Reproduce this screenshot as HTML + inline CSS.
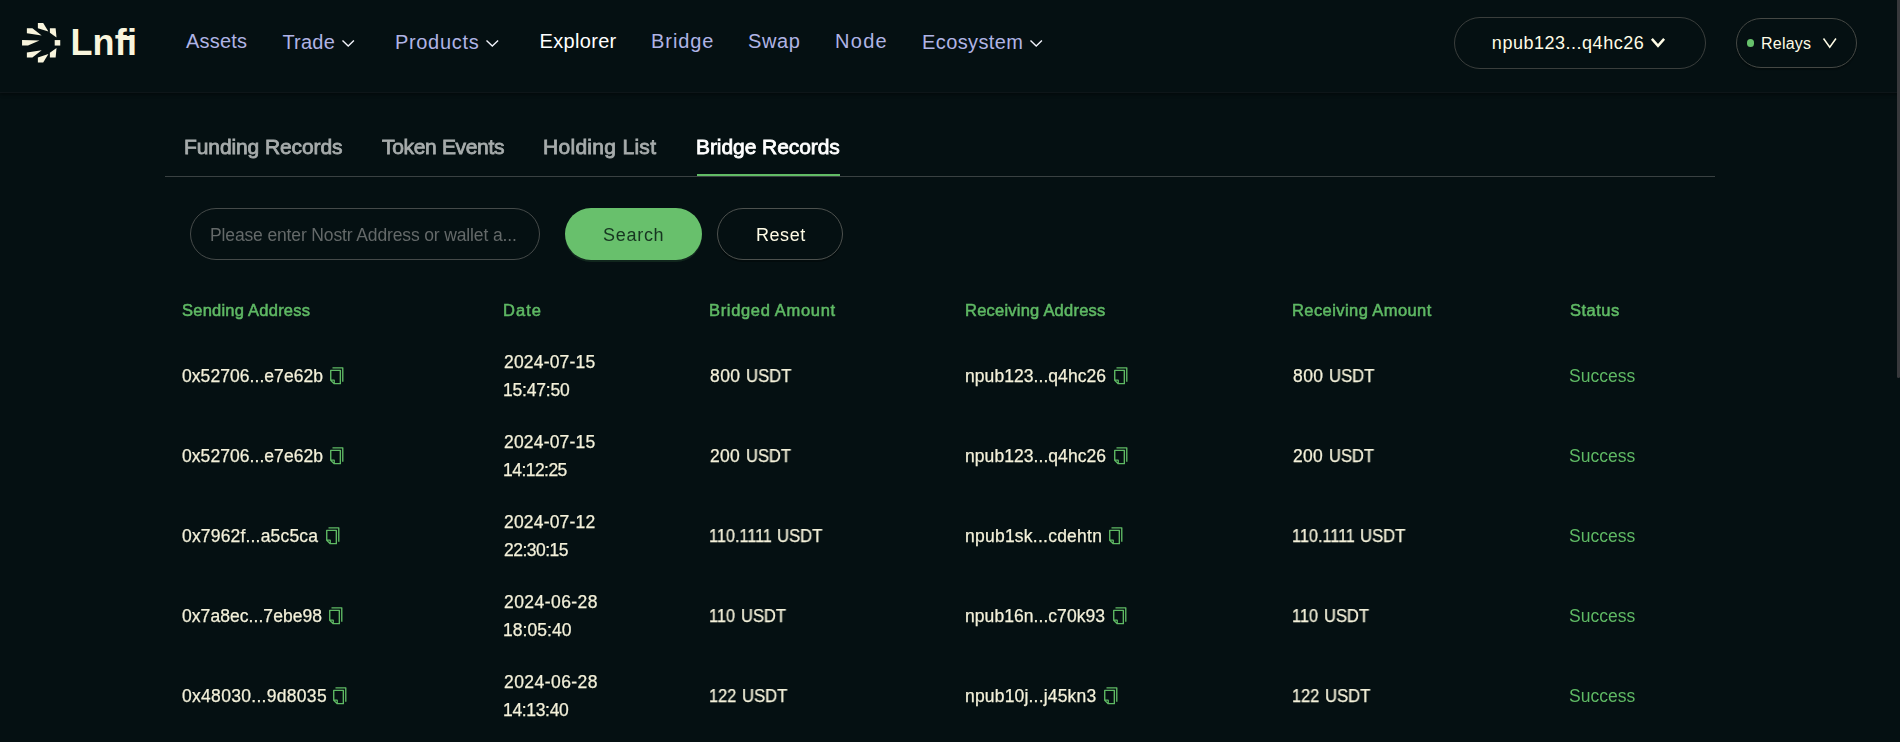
<!DOCTYPE html>
<html lang="en">
<head>
<meta charset="utf-8">
<title>Lnfi Explorer - Bridge Records</title>
<style>
html,body{margin:0;padding:0;background:#051012;}
body{position:relative;width:1900px;height:742px;overflow:hidden;font-family:"Liberation Sans", sans-serif;}
.t{position:absolute;white-space:nowrap;}
.abs{position:absolute;}
.g{will-change:transform;}
.b{-webkit-text-stroke:0.25px #f4f1da;}
.tb{-webkit-text-stroke:0.8px #a7acac;}
.tb.on{-webkit-text-stroke:0.8px #ffffff;}
.th{-webkit-text-stroke:0.55px #5fb964;}
.hdr{left:0;top:0;width:1900px;height:92px;border-bottom:1px solid #0e1619;box-shadow:0 2px 3px rgba(0,0,0,.35);background:#051012;}
.pill{box-sizing:border-box;border:1px solid #3e4341;border-radius:26px;}
.tabline{left:165px;top:176px;width:1550px;height:1px;background:#3a4142;}
.ink{left:697px;top:174px;width:143px;height:2px;background:#62bc66;}
.sb{left:1897px;top:0;width:3px;height:378px;background:#38393c;border-radius:0 0 2px 2px;}
.ic{fill:#5fb964;}
</style>
</head>
<body>
<header>
<div class="abs hdr"></div>
<svg class="abs" style="left:0;top:0" width="80" height="80" viewBox="0 0 80 80" fill="#f9f5dd"><polygon points="22.05,40.07 39.50,40.60 28.00,45.56 22.05,45.56"/><polygon points="54.70,40.07 60.25,40.07 60.25,45.56 54.70,45.56"/><polygon points="26.90,28.20 32.40,28.20 41.70,35.40 26.90,33.20"/><polygon points="26.90,57.40 32.40,57.40 41.70,50.20 26.90,52.40"/><polygon points="37.85,23.00 43.20,23.00 48.40,31.50 37.85,28.20"/><polygon points="37.85,62.60 43.20,62.60 48.40,54.10 37.85,57.40"/><polygon points="49.90,28.20 55.65,28.20 56.50,37.60 49.90,32.80"/><polygon points="49.90,57.40 55.65,57.40 56.50,48.00 49.90,52.80"/></svg>
<div class="abs" style="left:121px;top:35.9px;width:9px;height:4.3px;background:#f9f5dd"></div>
<div class="brand"><span class="t" style="left:70.39px;top:18.93px;font-size:36px;line-height:47px;color:#f9f5dd;font-weight:700;letter-spacing:0.240px;">Lnfi</span></div>
<nav>
<span class="t" style="left:186.00px;top:28.07px;font-size:20px;line-height:26px;color:#b0b4e5;letter-spacing:0.180px;">Assets</span>
<span class="t" style="left:282.40px;top:29.07px;font-size:20px;line-height:26px;color:#b0b4e5;letter-spacing:0.225px;">Trade</span><svg class="abs" style="left:339.80px;top:37.60px" width="16.40" height="10.70" viewBox="0 0 16.40 10.70" fill="none" stroke="#f2f3fb" stroke-width="1.4"><polyline points="2.49,2.49 8.20,8.00 13.91,2.49"/></svg>
<span class="t" style="left:394.88px;top:29.07px;font-size:20px;line-height:26px;color:#b0b4e5;letter-spacing:0.694px;">Products</span><svg class="abs" style="left:483.80px;top:37.60px" width="16.60" height="10.70" viewBox="0 0 16.60 10.70" fill="none" stroke="#f2f3fb" stroke-width="1.4"><polyline points="2.49,2.49 8.30,8.00 14.11,2.49"/></svg>
<span class="t" style="left:539.60px;top:28.07px;font-size:20px;line-height:26px;color:#ffffff;letter-spacing:0.309px;">Explorer</span>
<span class="t" style="left:651.10px;top:28.07px;font-size:20px;line-height:26px;color:#b0b4e5;letter-spacing:0.900px;">Bridge</span>
<span class="t" style="left:748.10px;top:28.07px;font-size:20px;line-height:26px;color:#b0b4e5;letter-spacing:0.600px;">Swap</span>
<span class="t" style="left:834.96px;top:28.07px;font-size:20px;line-height:26px;color:#b0b4e5;letter-spacing:1.320px;">Node</span>
<span class="t" style="left:922.10px;top:29.07px;font-size:20px;line-height:26px;color:#b0b4e5;letter-spacing:0.382px;">Ecosystem</span><svg class="abs" style="left:1027.80px;top:37.60px" width="16.40" height="10.70" viewBox="0 0 16.40 10.70" fill="none" stroke="#f2f3fb" stroke-width="1.4"><polyline points="2.49,2.49 8.20,8.00 13.91,2.49"/></svg>
</nav>
<div class="account">
<div class="abs pill" style="left:1454px;top:17px;width:252px;height:52px;border-color:#3a3e3c"></div>
<span class="t" style="left:1491.86px;top:32.26px;font-size:18px;line-height:23px;color:#fffce6;letter-spacing:0.516px;">npub123...q4hc26</span>
<svg class="abs" style="left:1649.20px;top:36.20px" width="18.00" height="13.00" viewBox="0 0 18.00 13.00" fill="none" stroke="#fffce6" stroke-width="2.5"><polyline points="2.88,2.88 9.00,9.75 15.12,2.88"/></svg>
</div>
<div class="relays">
<div class="abs pill" style="left:1736px;top:18px;width:121px;height:50px;border-radius:25px;border-color:#454844;box-shadow:0 2px 1px rgba(0,0,0,.25)"></div>
<div class="abs" style="left:1746.7px;top:39px;width:7.6px;height:7.6px;border-radius:50%;background:#66c16b"></div>
<span class="t" style="left:1761.10px;top:32.96px;font-size:16px;line-height:21px;color:#fffce6;letter-spacing:0.180px;">Relays</span>
<svg class="abs" style="left:1820.50px;top:36.00px" width="17.50" height="14.00" viewBox="0 0 17.50 14.00" fill="none" stroke="#fffce6" stroke-width="1.5"><polyline points="2.52,2.52 8.75,11.25 14.97,2.52"/></svg>
</div>
</header>
<main>
<div role="tablist">
<span class="t g tb" style="left:184.10px;top:132.62px;font-size:21px;line-height:27px;color:#a7acac;letter-spacing:-0.103px;">Funding Records</span>
<span class="t g tb" style="left:382.00px;top:132.62px;font-size:21px;line-height:27px;color:#a7acac;letter-spacing:-0.327px;">Token Events</span>
<span class="t g tb" style="left:543.32px;top:132.62px;font-size:21px;line-height:27px;color:#a7acac;letter-spacing:0.295px;">Holding List</span>
<span class="t g tb on" style="left:696.10px;top:132.62px;font-size:21px;line-height:27px;color:#ffffff;letter-spacing:-0.069px;">Bridge Records</span>
<div class="abs tabline"></div>
<div class="abs ink"></div>
</div>
<div class="filters">
<div class="abs pill" style="left:190px;top:208px;width:350px;height:52px;border-color:#454a49"></div>
<span class="t g" style="left:210.15px;top:224.44px;font-size:17.5px;line-height:23px;color:#646969;letter-spacing:-0.135px;">Please enter Nostr Address or wallet a...</span>
<div class="abs" style="left:565px;top:208px;width:137px;height:52px;border-radius:26px;background:#68c06c;box-shadow:0 2px 0 rgba(104,192,108,.13)"></div>
<span class="t g" style="left:603.10px;top:224.26px;font-size:18px;line-height:23px;color:#163520;letter-spacing:0.720px;">Search</span>
<div class="abs pill" style="left:717px;top:208px;width:126px;height:52px;border-color:#4d514e;box-shadow:0 2px 0 rgba(0,0,0,.3)"></div>
<span class="t g" style="left:755.88px;top:224.26px;font-size:18px;line-height:23px;color:#fffce6;letter-spacing:0.540px;">Reset</span>
</div>
<div role="table">
<div role="row">
<span class="t g th" style="left:182.40px;top:300.18px;font-size:16.5px;line-height:21px;color:#5fb964;letter-spacing:0.231px;">Sending Address</span>
<span class="t g th" style="left:502.88px;top:300.18px;font-size:16.5px;line-height:21px;color:#5fb964;letter-spacing:1.020px;">Date</span>
<span class="t g th" style="left:709.10px;top:300.18px;font-size:16.5px;line-height:21px;color:#5fb964;letter-spacing:0.665px;">Bridged Amount</span>
<span class="t g th" style="left:965.10px;top:300.18px;font-size:16.5px;line-height:21px;color:#5fb964;letter-spacing:0.225px;">Receiving Address</span>
<span class="t g th" style="left:1292.10px;top:300.18px;font-size:16.5px;line-height:21px;color:#5fb964;letter-spacing:0.420px;">Receiving Amount</span>
<span class="t g th" style="left:1569.60px;top:300.18px;font-size:16.5px;line-height:21px;color:#5fb964;letter-spacing:0.504px;">Status</span>
</div>
<div role="row">
<span class="t g b" style="left:182.00px;top:365.24px;font-size:17.5px;line-height:23px;color:#f4f1da;letter-spacing:0.060px;">0x52706...e7e62b</span>
<svg class="abs ic" style="left:326.65px;top:366.00px" width="19.5" height="19.5" viewBox="0 0 1024 1024"><path d="M832 64H296c-4.400 0-8 3.600-8 8v56c0 4.400 3.600 8 8 8h496v688c0 4.400 3.600 8 8 8h56c4.400 0 8-3.600 8-8V96c0-17.700-14.300-32-32-32zM704 192H192c-17.700 0-32 14.300-32 32v530.700c0 8.500 3.400 16.600 9.400 22.600l173.300 173.300c2.200 2.200 4.700 4 7.400 5.500v1.900h4.200c3.500 1.300 7.200 2 11 2H704c17.700 0 32-14.300 32-32V224c0-17.700-14.300-32-32-32zM350 856.200L263.900 770H350v86.200zM664 888H414V746c0-22.100-17.900-40-40-40H232V264h432v624z"/></svg>
<span class="t g b" style="left:503.60px;top:351.24px;font-size:17.5px;line-height:23px;color:#f4f1da;letter-spacing:0.180px;">2024-07-15</span>
<span class="t g b" style="left:502.88px;top:379.24px;font-size:17.5px;line-height:23px;color:#f4f1da;letter-spacing:-0.206px;">15:47:50</span>
<span class="t g b" style="left:710.00px;top:365.24px;font-size:17.5px;line-height:23px;color:#f4f1da;letter-spacing:0.450px;">800</span>
<span class="t g b" style="left:745.81px;top:365.24px;font-size:17.5px;line-height:23px;color:#f4f1da;transform:scaleX(0.9514);transform-origin:0 0;">USDT</span>
<span class="t g b" style="left:965.10px;top:365.24px;font-size:17.5px;line-height:23px;color:#f4f1da;letter-spacing:0.060px;">npub123...q4hc26</span>
<svg class="abs ic" style="left:1111.15px;top:366.00px" width="19.5" height="19.5" viewBox="0 0 1024 1024"><path d="M832 64H296c-4.400 0-8 3.600-8 8v56c0 4.400 3.600 8 8 8h496v688c0 4.400 3.600 8 8 8h56c4.400 0 8-3.600 8-8V96c0-17.700-14.300-32-32-32zM704 192H192c-17.700 0-32 14.300-32 32v530.700c0 8.500 3.400 16.600 9.400 22.600l173.300 173.300c2.200 2.200 4.700 4 7.400 5.500v1.900h4.200c3.500 1.300 7.200 2 11 2H704c17.700 0 32-14.300 32-32V224c0-17.700-14.300-32-32-32zM350 856.200L263.900 770H350v86.200zM664 888H414V746c0-22.100-17.900-40-40-40H232V264h432v624z"/></svg>
<span class="t g b" style="left:1293.00px;top:365.24px;font-size:17.5px;line-height:23px;color:#f4f1da;letter-spacing:0.450px;">800</span>
<span class="t g b" style="left:1328.81px;top:365.24px;font-size:17.5px;line-height:23px;color:#f4f1da;transform:scaleX(0.9514);transform-origin:0 0;">USDT</span>
<span class="t g" style="left:1569.29px;top:365.24px;font-size:17.5px;line-height:23px;color:#5fb964;letter-spacing:0.030px;">Success</span>
</div>
<div role="row">
<span class="t g b" style="left:182.00px;top:445.24px;font-size:17.5px;line-height:23px;color:#f4f1da;letter-spacing:0.060px;">0x52706...e7e62b</span>
<svg class="abs ic" style="left:326.65px;top:446.00px" width="19.5" height="19.5" viewBox="0 0 1024 1024"><path d="M832 64H296c-4.400 0-8 3.600-8 8v56c0 4.400 3.600 8 8 8h496v688c0 4.400 3.600 8 8 8h56c4.400 0 8-3.600 8-8V96c0-17.700-14.300-32-32-32zM704 192H192c-17.700 0-32 14.300-32 32v530.700c0 8.500 3.400 16.600 9.400 22.600l173.300 173.300c2.200 2.200 4.700 4 7.400 5.500v1.900h4.200c3.500 1.300 7.200 2 11 2H704c17.700 0 32-14.300 32-32V224c0-17.700-14.300-32-32-32zM350 856.200L263.900 770H350v86.200zM664 888H414V746c0-22.100-17.900-40-40-40H232V264h432v624z"/></svg>
<span class="t g b" style="left:503.60px;top:431.24px;font-size:17.5px;line-height:23px;color:#f4f1da;letter-spacing:0.180px;">2024-07-15</span>
<span class="t g b" style="left:502.88px;top:459.24px;font-size:17.5px;line-height:23px;color:#f4f1da;letter-spacing:-0.540px;">14:12:25</span>
<span class="t g b" style="left:710.40px;top:445.24px;font-size:17.5px;line-height:23px;color:#f4f1da;letter-spacing:0.270px;">200</span>
<span class="t g b" style="left:745.82px;top:445.24px;font-size:17.5px;line-height:23px;color:#f4f1da;transform:scaleX(0.9427);transform-origin:0 0;">USDT</span>
<span class="t g b" style="left:965.10px;top:445.24px;font-size:17.5px;line-height:23px;color:#f4f1da;letter-spacing:0.060px;">npub123...q4hc26</span>
<svg class="abs ic" style="left:1111.15px;top:446.00px" width="19.5" height="19.5" viewBox="0 0 1024 1024"><path d="M832 64H296c-4.400 0-8 3.600-8 8v56c0 4.400 3.600 8 8 8h496v688c0 4.400 3.600 8 8 8h56c4.400 0 8-3.600 8-8V96c0-17.700-14.300-32-32-32zM704 192H192c-17.700 0-32 14.300-32 32v530.700c0 8.500 3.400 16.600 9.400 22.600l173.300 173.300c2.200 2.200 4.700 4 7.400 5.500v1.900h4.200c3.500 1.300 7.200 2 11 2H704c17.700 0 32-14.300 32-32V224c0-17.700-14.300-32-32-32zM350 856.200L263.900 770H350v86.200zM664 888H414V746c0-22.100-17.900-40-40-40H232V264h432v624z"/></svg>
<span class="t g b" style="left:1293.40px;top:445.24px;font-size:17.5px;line-height:23px;color:#f4f1da;letter-spacing:0.270px;">200</span>
<span class="t g b" style="left:1328.82px;top:445.24px;font-size:17.5px;line-height:23px;color:#f4f1da;transform:scaleX(0.9427);transform-origin:0 0;">USDT</span>
<span class="t g" style="left:1569.29px;top:445.24px;font-size:17.5px;line-height:23px;color:#5fb964;letter-spacing:0.030px;">Success</span>
</div>
<div role="row">
<span class="t g b" style="left:182.00px;top:525.24px;font-size:17.5px;line-height:23px;color:#f4f1da;letter-spacing:0.180px;">0x7962f...a5c5ca</span>
<svg class="abs ic" style="left:323.15px;top:526.00px" width="19.5" height="19.5" viewBox="0 0 1024 1024"><path d="M832 64H296c-4.400 0-8 3.600-8 8v56c0 4.400 3.600 8 8 8h496v688c0 4.400 3.600 8 8 8h56c4.400 0 8-3.600 8-8V96c0-17.700-14.300-32-32-32zM704 192H192c-17.700 0-32 14.300-32 32v530.700c0 8.500 3.400 16.600 9.400 22.600l173.300 173.300c2.200 2.200 4.700 4 7.400 5.500v1.900h4.200c3.500 1.300 7.200 2 11 2H704c17.700 0 32-14.300 32-32V224c0-17.700-14.300-32-32-32zM350 856.200L263.900 770H350v86.200zM664 888H414V746c0-22.100-17.900-40-40-40H232V264h432v624z"/></svg>
<span class="t g b" style="left:503.60px;top:511.24px;font-size:17.5px;line-height:23px;color:#f4f1da;letter-spacing:0.180px;">2024-07-12</span>
<span class="t g b" style="left:503.60px;top:539.24px;font-size:17.5px;line-height:23px;color:#f4f1da;letter-spacing:-0.514px;">22:30:15</span>
<span class="t g b" style="left:709.44px;top:525.24px;font-size:17.5px;line-height:23px;color:#f4f1da;transform:scaleX(0.9278);transform-origin:0 0;">110.1111</span>
<span class="t g b" style="left:776.81px;top:525.24px;font-size:17.5px;line-height:23px;color:#f4f1da;transform:scaleX(0.9514);transform-origin:0 0;">USDT</span>
<span class="t g b" style="left:965.10px;top:525.24px;font-size:17.5px;line-height:23px;color:#f4f1da;letter-spacing:0.240px;">npub1sk...cdehtn</span>
<svg class="abs ic" style="left:1106.15px;top:526.00px" width="19.5" height="19.5" viewBox="0 0 1024 1024"><path d="M832 64H296c-4.400 0-8 3.600-8 8v56c0 4.400 3.600 8 8 8h496v688c0 4.400 3.600 8 8 8h56c4.400 0 8-3.600 8-8V96c0-17.700-14.300-32-32-32zM704 192H192c-17.700 0-32 14.300-32 32v530.700c0 8.500 3.400 16.600 9.400 22.600l173.300 173.300c2.200 2.200 4.700 4 7.400 5.500v1.900h4.200c3.500 1.300 7.200 2 11 2H704c17.700 0 32-14.300 32-32V224c0-17.700-14.300-32-32-32zM350 856.200L263.900 770H350v86.200zM664 888H414V746c0-22.100-17.900-40-40-40H232V264h432v624z"/></svg>
<span class="t g b" style="left:1292.44px;top:525.24px;font-size:17.5px;line-height:23px;color:#f4f1da;transform:scaleX(0.9278);transform-origin:0 0;">110.1111</span>
<span class="t g b" style="left:1359.81px;top:525.24px;font-size:17.5px;line-height:23px;color:#f4f1da;transform:scaleX(0.9514);transform-origin:0 0;">USDT</span>
<span class="t g" style="left:1569.29px;top:525.24px;font-size:17.5px;line-height:23px;color:#5fb964;letter-spacing:0.030px;">Success</span>
</div>
<div role="row">
<span class="t g b" style="left:182.00px;top:605.24px;font-size:17.5px;line-height:23px;color:#f4f1da;letter-spacing:0.060px;">0x7a8ec...7ebe98</span>
<svg class="abs ic" style="left:326.15px;top:606.00px" width="19.5" height="19.5" viewBox="0 0 1024 1024"><path d="M832 64H296c-4.400 0-8 3.600-8 8v56c0 4.400 3.600 8 8 8h496v688c0 4.400 3.600 8 8 8h56c4.400 0 8-3.600 8-8V96c0-17.700-14.300-32-32-32zM704 192H192c-17.700 0-32 14.300-32 32v530.700c0 8.500 3.400 16.600 9.400 22.600l173.300 173.300c2.200 2.200 4.700 4 7.400 5.500v1.900h4.200c3.500 1.300 7.200 2 11 2H704c17.700 0 32-14.300 32-32V224c0-17.700-14.300-32-32-32zM350 856.200L263.900 770H350v86.200zM664 888H414V746c0-22.100-17.900-40-40-40H232V264h432v624z"/></svg>
<span class="t g b" style="left:503.60px;top:591.24px;font-size:17.5px;line-height:23px;color:#f4f1da;letter-spacing:0.440px;">2024-06-28</span>
<span class="t g b" style="left:502.88px;top:619.24px;font-size:17.5px;line-height:23px;color:#f4f1da;letter-spacing:0.051px;">18:05:40</span>
<span class="t g b" style="left:709.44px;top:605.24px;font-size:17.5px;line-height:23px;color:#f4f1da;transform:scaleX(0.9295);transform-origin:0 0;">110</span>
<span class="t g b" style="left:741.22px;top:605.24px;font-size:17.5px;line-height:23px;color:#f4f1da;transform:scaleX(0.9427);transform-origin:0 0;">USDT</span>
<span class="t g b" style="left:965.10px;top:605.24px;font-size:17.5px;line-height:23px;color:#f4f1da;letter-spacing:0.060px;">npub16n...c70k93</span>
<svg class="abs ic" style="left:1109.65px;top:606.00px" width="19.5" height="19.5" viewBox="0 0 1024 1024"><path d="M832 64H296c-4.400 0-8 3.600-8 8v56c0 4.400 3.600 8 8 8h496v688c0 4.400 3.600 8 8 8h56c4.400 0 8-3.600 8-8V96c0-17.700-14.300-32-32-32zM704 192H192c-17.700 0-32 14.300-32 32v530.700c0 8.500 3.400 16.600 9.400 22.600l173.300 173.300c2.200 2.200 4.700 4 7.400 5.500v1.900h4.200c3.500 1.300 7.200 2 11 2H704c17.700 0 32-14.300 32-32V224c0-17.700-14.300-32-32-32zM350 856.200L263.900 770H350v86.200zM664 888H414V746c0-22.100-17.900-40-40-40H232V264h432v624z"/></svg>
<span class="t g b" style="left:1292.44px;top:605.24px;font-size:17.5px;line-height:23px;color:#f4f1da;transform:scaleX(0.9295);transform-origin:0 0;">110</span>
<span class="t g b" style="left:1324.22px;top:605.24px;font-size:17.5px;line-height:23px;color:#f4f1da;transform:scaleX(0.9427);transform-origin:0 0;">USDT</span>
<span class="t g" style="left:1569.29px;top:605.24px;font-size:17.5px;line-height:23px;color:#5fb964;letter-spacing:0.030px;">Success</span>
</div>
<div role="row">
<span class="t g b" style="left:182.00px;top:685.24px;font-size:17.5px;line-height:23px;color:#f4f1da;letter-spacing:0.300px;">0x48030...9d8035</span>
<svg class="abs ic" style="left:330.15px;top:686.00px" width="19.5" height="19.5" viewBox="0 0 1024 1024"><path d="M832 64H296c-4.400 0-8 3.600-8 8v56c0 4.400 3.600 8 8 8h496v688c0 4.400 3.600 8 8 8h56c4.400 0 8-3.600 8-8V96c0-17.700-14.300-32-32-32zM704 192H192c-17.700 0-32 14.300-32 32v530.700c0 8.500 3.400 16.600 9.400 22.600l173.300 173.300c2.200 2.200 4.700 4 7.400 5.500v1.900h4.200c3.500 1.300 7.200 2 11 2H704c17.700 0 32-14.300 32-32V224c0-17.700-14.300-32-32-32zM350 856.200L263.900 770H350v86.200zM664 888H414V746c0-22.100-17.900-40-40-40H232V264h432v624z"/></svg>
<span class="t g b" style="left:503.60px;top:671.24px;font-size:17.5px;line-height:23px;color:#f4f1da;letter-spacing:0.440px;">2024-06-28</span>
<span class="t g b" style="left:502.88px;top:699.24px;font-size:17.5px;line-height:23px;color:#f4f1da;letter-spacing:-0.334px;">14:13:40</span>
<span class="t g b" style="left:709.43px;top:685.24px;font-size:17.5px;line-height:23px;color:#f4f1da;transform:scaleX(0.9321);transform-origin:0 0;">122</span>
<span class="t g b" style="left:741.81px;top:685.24px;font-size:17.5px;line-height:23px;color:#f4f1da;transform:scaleX(0.9514);transform-origin:0 0;">USDT</span>
<span class="t g b" style="left:965.10px;top:685.24px;font-size:17.5px;line-height:23px;color:#f4f1da;letter-spacing:0.180px;">npub10j...j45kn3</span>
<svg class="abs ic" style="left:1100.65px;top:686.00px" width="19.5" height="19.5" viewBox="0 0 1024 1024"><path d="M832 64H296c-4.400 0-8 3.600-8 8v56c0 4.400 3.600 8 8 8h496v688c0 4.400 3.600 8 8 8h56c4.400 0 8-3.600 8-8V96c0-17.700-14.300-32-32-32zM704 192H192c-17.700 0-32 14.300-32 32v530.700c0 8.500 3.400 16.600 9.400 22.600l173.300 173.300c2.200 2.200 4.700 4 7.400 5.500v1.900h4.200c3.500 1.300 7.200 2 11 2H704c17.700 0 32-14.300 32-32V224c0-17.700-14.300-32-32-32zM350 856.200L263.900 770H350v86.200zM664 888H414V746c0-22.100-17.900-40-40-40H232V264h432v624z"/></svg>
<span class="t g b" style="left:1292.43px;top:685.24px;font-size:17.5px;line-height:23px;color:#f4f1da;transform:scaleX(0.9321);transform-origin:0 0;">122</span>
<span class="t g b" style="left:1324.81px;top:685.24px;font-size:17.5px;line-height:23px;color:#f4f1da;transform:scaleX(0.9514);transform-origin:0 0;">USDT</span>
<span class="t g" style="left:1569.29px;top:685.24px;font-size:17.5px;line-height:23px;color:#5fb964;letter-spacing:0.030px;">Success</span>
</div>
</div>
</main>
<div class="abs sb"></div>
</body>
</html>
